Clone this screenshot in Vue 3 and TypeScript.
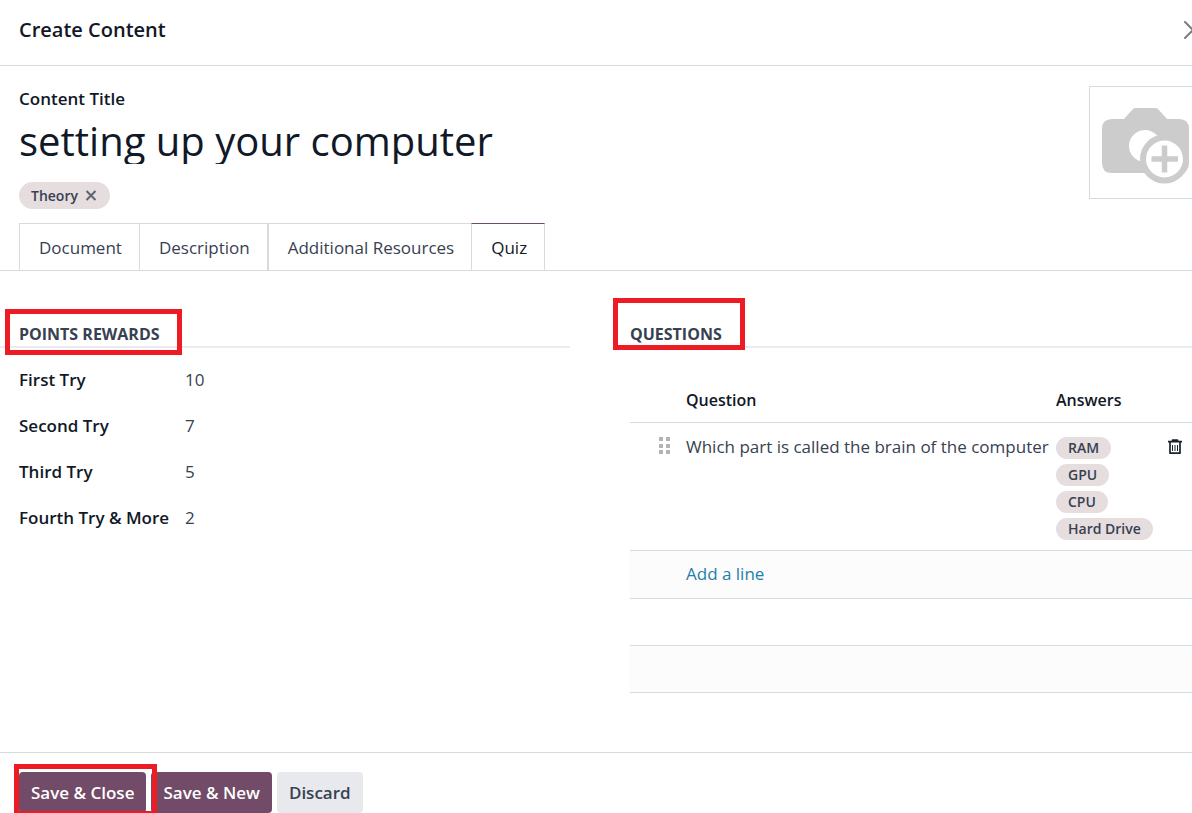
<script setup lang="ts">
import { ref } from 'vue'

interface Reward {
  id: string
  label: string
  value: string
}

interface Question {
  text: string
  answers: string[]
}

const title = ref('setting up your computer')
const tabs = ['Document', 'Description', 'Additional Resources', 'Quiz']
const activeTab = ref('Quiz')

const rewards = ref<Reward[]>([
  { id: 'first-try', label: 'First Try', value: '10' },
  { id: 'second-try', label: 'Second Try', value: '7' },
  { id: 'third-try', label: 'Third Try', value: '5' },
  { id: 'fourth-try', label: 'Fourth Try & More', value: '2' },
])

const questions: Question[] = [
  {
    text: 'Which part is called the brain of the computer',
    answers: ['RAM', 'GPU', 'CPU', 'Hard Drive'],
  },
]
</script>

<template>
  <div class="dialog">
    <header class="dialog-header">
      <h1>Create Content</h1>
      <button class="close" type="button" aria-label="Close">
        <svg width="8" height="18" viewBox="0 0 8 18">
          <path d="M1 1L17 17M17 1L1 17" fill="none" stroke="#7c7b87" stroke-width="2" stroke-linecap="round" />
        </svg>
      </button>
    </header>

    <main>
      <section class="intro">
        <div class="intro-text">
          <label class="title-label" for="content-title">Content Title</label>
          <input id="content-title" v-model="title" class="title-input" type="text" />
          <div class="tags">
            <span class="tag">
              Theory
              <button class="tag-remove" type="button" aria-label="Remove Theory">
                <svg width="12" height="12" viewBox="0 0 12 12">
                  <path d="M1.500 1L10.500 10M10.500 1L1.500 10" fill="none" stroke="#5f636f" stroke-width="2" />
                </svg>
              </button>
            </span>
          </div>
        </div>
        <button class="picture" type="button" aria-label="Upload image">
          <svg width="88" height="76" viewBox="0 0 88 76">
            <path
              d="M10 11H22L31 1Q32 0 34 0H53Q55 0 56 1L65 11H77Q87 11 87 21V55Q87 65 77 65H10Q0 65 0 55V21Q0 11 10 11Z"
              fill="#cccccc"
            />
            <circle cx="43" cy="38" r="16" fill="#ffffff" />
            <circle cx="62.500" cy="51" r="24.500" fill="#cccccc" />
            <circle cx="62.500" cy="51" r="18.500" fill="#ffffff" />
            <path d="M49.500 51H76M62.500 37.500V64.500" fill="none" stroke="#cccccc" stroke-width="5.500" />
          </svg>
        </button>
      </section>

      <nav class="tabs" role="tablist">
        <button
          v-for="tab in tabs"
          :key="tab"
          type="button"
          role="tab"
          class="tab"
          :class="{ active: tab === activeTab }"
          :aria-selected="tab === activeTab"
          @click="activeTab = tab"
        >
          {{ tab }}
        </button>
      </nav>

      <div class="columns">
        <section class="rewards">
          <h2>Points Rewards<span class="marker marker-points"></span></h2>
          <div class="reward-list">
            <div v-for="reward in rewards" :key="reward.id" class="reward">
              <label :for="reward.id">{{ reward.label }}</label>
              <input :id="reward.id" v-model="reward.value" type="text" />
            </div>
          </div>
        </section>

        <section class="questions">
          <h2>Questions<span class="marker marker-questions"></span></h2>
          <table>
            <thead>
              <tr>
                <th class="col-handle"></th>
                <th class="col-question">Question</th>
                <th>Answers</th>
                <th class="col-delete"></th>
              </tr>
            </thead>
            <tbody>
              <tr v-for="question in questions" :key="question.text" class="question-row">
                <td class="handle">
                  <svg width="12" height="18" viewBox="0 0 12 18">
                    <path
                      d="M0 0H4V4H0ZM7 0H11V4H7ZM0 7H4V11H0ZM7 7H11V11H7ZM0 13H4V17H0ZM7 13H11V17H7Z"
                      fill="#b4b4b7"
                    />
                  </svg>
                </td>
                <td class="question-text">{{ question.text }}</td>
                <td>
                  <div class="answers">
                    <span v-for="answer in question.answers" :key="answer" class="answer">{{ answer }}</span>
                  </div>
                </td>
                <td>
                  <button class="delete" type="button" aria-label="Delete row">
                    <svg width="14" height="16" viewBox="0 0 14 16">
                      <path
                        d="M0 2.700H14M4.500 2.500V1H9.500V2.500M2 3V14.200H12V3"
                        fill="none"
                        stroke="#1b2130"
                        stroke-width="1.700"
                        stroke-linejoin="round"
                      />
                      <path d="M4.500 6V12M7 6V12M9.500 6V12" fill="none" stroke="#1b2130" stroke-width="1" />
                    </svg>
                  </button>
                </td>
              </tr>
              <tr class="add-row shaded">
                <td></td>
                <td colspan="3"><a href="#">Add a line</a></td>
              </tr>
              <tr><td colspan="4"></td></tr>
              <tr class="shaded"><td colspan="4"></td></tr>
            </tbody>
          </table>
        </section>
      </div>
    </main>

    <footer>
      <div class="marked">
        <button class="btn primary" type="button">Save &amp; Close</button>
        <span class="marker marker-save"></span>
      </div>
      <button class="btn primary" type="button">Save &amp; New</button>
      <button class="btn secondary" type="button">Discard</button>
    </footer>
  </div>
</template>

<style>
body {
  margin: 0;
  overflow: hidden;
}
</style>

<style scoped>
.dialog {
  display: flex;
  flex-direction: column;
  min-height: 100vh;
  background: #ffffff;
  color: #374151;
  font-family: 'Open Sans', 'Noto Sans', sans-serif;
  font-size: 17px;
  line-height: 24px;
}

.dialog * {
  box-sizing: border-box;
}

button,
input {
  padding: 0;
  border: 0;
  background: none;
  color: inherit;
  font: inherit;
}

h1,
h2 {
  margin: 0;
}

.dialog-header {
  display: flex;
  align-items: center;
  justify-content: space-between;
  height: 66px;
  padding: 0 0 5px 19px;
  border-bottom: 1px solid #d8dadd;
}

h1 {
  color: #111827;
  font-size: 20px;
  font-weight: 600;
  line-height: 28px;
}

.close,
.tag-remove,
.delete {
  display: flex;
}

main {
  flex: 1;
}

.intro {
  display: flex;
  justify-content: space-between;
  padding: 20px 0 14px 19px;
}

.intro-text {
  flex: 1;
  display: flex;
  flex-direction: column;
}

.title-label {
  height: 30px;
  padding-top: 1px;
  color: #111827;
  font-weight: 600;
}

.title-input {
  width: 100%;
  height: 48px;
  padding-top: 2px;
  outline: 0;
  color: #111827;
  font-size: 40px;
  line-height: 48px;
}

.tags {
  display: flex;
  margin-top: 18px;
}

.tag {
  display: flex;
  align-items: center;
  gap: 7px;
  height: 27px;
  padding: 0 13px 0 12px;
  border-radius: 14px;
  background: #e6dddf;
  font-size: 14px;
  font-weight: 600;
}

.picture {
  display: flex;
  align-items: center;
  width: 103px;
  height: 113px;
  padding: 6px 0 0 12px;
  border: 1px solid #d8dadd;
  border-right: 0;
}

.tabs {
  display: flex;
  padding-left: 19px;
  border-bottom: 1px solid #d8dadd;
}

.tab {
  height: 47px;
  padding: 1px 17px 0 19px;
  border: 1px solid #d8dadd;
  border-width: 1px 0 0 1px;
}

.tab:nth-child(3) {
  border-left-width: 2px;
}

.tab.active {
  border-top-color: #714b67;
  border-right-width: 1px;
  color: #111827;
}

.columns {
  display: grid;
  grid-template-columns: 570fr 562fr;
  gap: 60px;
  padding-top: 50px;
}

h2 {
  position: relative;
  height: 27px;
  border-bottom: 2px solid #ebecee;
  font-size: 16px;
  font-weight: 700;
  line-height: 26px;
  text-transform: uppercase;
}

.rewards h2,
.reward-list {
  padding-left: 19px;
}

.marker {
  position: absolute;
  border: 5px solid #ed1c24;
  pointer-events: none;
}

.marker-points {
  top: -12px;
  left: 5px;
  width: 177px;
  height: 46px;
}

.marker-questions {
  top: -23px;
  left: -17px;
  width: 132px;
  height: 52px;
}

.marker-save {
  top: -8px;
  left: -5px;
  width: 143px;
  height: 52px;
}

.reward-list {
  padding-top: 9px;
}

.reward {
  display: flex;
  align-items: center;
  height: 46px;
}

.reward label {
  width: 166px;
  color: #111827;
  font-weight: 600;
}

.reward input {
  flex: 1;
  min-width: 0;
}

table {
  width: 100%;
  margin-top: 28px;
  border-collapse: collapse;
  table-layout: fixed;
}

th {
  height: 46px;
  padding: 2px 0 0;
  color: #111827;
  font-size: 16px;
  font-weight: 600;
  text-align: left;
}

tr {
  border-bottom: 1px solid #d8dadd;
}

td {
  height: 47px;
  padding: 0;
}

.add-row td {
  height: 48px;
}

.col-handle {
  width: 56px;
}

.col-question {
  width: 370px;
}

.col-delete {
  width: 24px;
}

.question-row td {
  padding: 14px 0 10px;
  vertical-align: top;
}

.question-row .question-text {
  padding-top: 12px;
  white-space: nowrap;
}

.question-row .handle {
  padding: 14px 0 0 29px;
}

.question-row .delete {
  padding-top: 2px;
}

.answers {
  display: flex;
  flex-direction: column;
  align-items: flex-start;
  gap: 5px;
}

.answer {
  padding: 0 12px;
  border-radius: 11px;
  background: #e6dddf;
  font-size: 14px;
  font-weight: 600;
  line-height: 22px;
}

.shaded {
  background: #fcfcfc;
}

a {
  color: #1f7fa8;
  text-decoration: none;
}

footer {
  display: flex;
  gap: 5px;
  padding: 19px 0 0 19px;
  border-top: 1px solid #d8dadd;
}

.marked {
  position: relative;
}

.btn {
  height: 41px;
  padding: 1px 12px 0;
  border-radius: 4px;
  font-weight: 600;
}

.primary {
  background: #714b67;
  color: #ffffff;
}

.secondary {
  background: #e7e9ed;
}
</style>
